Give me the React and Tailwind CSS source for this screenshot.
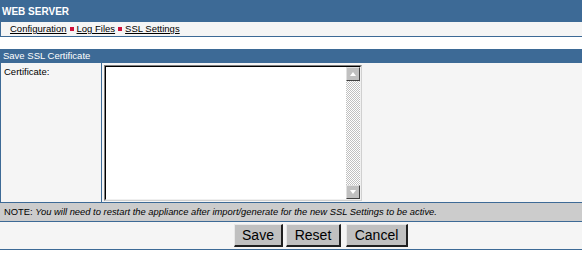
import React from 'react';

const blue = 'bg-[#3d6a96]';

const Sep = () => <span className="inline-block w-[4px] h-[4px] bg-[#d0103a] mx-[3px] mb-[1px]"></span>;

const Arrow = ({ up }) => (
  <div className="w-[14px] h-[14px] bg-[#c0c0c0] border-t border-l border-t-[#e0e0e0] border-l-[#e0e0e0] border-b border-r border-b-[#404040] border-r-[#404040] flex items-center justify-center">
    <svg width="8" height="6" viewBox="0 0 8 6">
      {up ? (
        <path d="M4 1 L7 5 L1 5 Z" fill="#ffffff" />
      ) : (
        <path d="M1 1 L7 1 L4 5 Z" fill="#ffffff" />
      )}
    </svg>
  </div>
);

const Button = ({ label, w }) => (
  <button
    className={`h-[23px] ${w} bg-[#c0c0c0] text-[14px] text-black border-t border-l border-t-[#e8e8e8] border-l-[#e8e8e8] border-b-2 border-r-2 border-b-[#202020] border-r-[#202020] leading-none`}
  >
    {label}
  </button>
);

export default function App() {
  return (
    <div className="w-[582px] text-[9.5px] text-black bg-white" style={{ fontFamily: '"Liberation Sans", Arial, sans-serif' }}>
      <div className={`${blue} h-[22px] flex items-center px-[2px] text-white font-bold text-[10px]`}>
        WEB SERVER
      </div>
      <div className="h-[15px] bg-[#f5f5f5] border-l border-b border-[#3d6a96] flex items-center pl-[9px]">
        <a className="underline text-black">Configuration</a>
        <Sep />
        <a className="underline text-black">Log Files</a>
        <Sep />
        <a className="underline text-black">SSL Settings</a>
      </div>

      <div className="mt-[12px]">
        <div className={`${blue} h-[14px] flex items-center px-[3px] text-white`}>
          Save SSL Certificate
        </div>
        <div className="flex bg-[#f5f5f5] border-l border-[#3d6a96] h-[139px]">
          <div className="w-[101px] border-r border-[#3d6a96] px-[3px] pt-[2px]">Certificate:</div>
          <div className="pl-[2px] pt-[2px]">
            <div className="w-[258px] h-[136px] border border-t-[#808080] border-l-[#808080] border-b-[#d0d0d0] border-r-[#d0d0d0]">
              <div className="w-full h-full border border-black border-b-[#f0f0f0] border-r-[#f0f0f0] bg-white flex justify-end">
                <div className="w-[14px] h-full flex flex-col bg-[repeating-conic-gradient(#c0c0c0_0_25%,#ffffff_0_50%)] bg-[length:2px_2px]">
                  <Arrow up />
                  <div className="flex-1"></div>
                  <Arrow />
                </div>
              </div>
            </div>
          </div>
        </div>
        <div className="h-[20px] bg-[#cccccc] border-t border-b border-[#3d6a96] flex items-center pl-[4px] text-[9.4px]">
          NOTE:&nbsp;<i>You will need to restart the appliance after import/generate for the new SSL Settings to be active.</i>
        </div>
        <div className="h-[28px] bg-[#f5f5f5] border-b border-[#3d6a96] flex items-center pl-[234px] gap-[3px]">
          <Button label="Save" w="w-[49px]" />
          <Button label="Reset" w="w-[55px]" />
          <Button label="Cancel" w="w-[62px] ml-[2px]" />
        </div>
      </div>
    </div>
  );
}
